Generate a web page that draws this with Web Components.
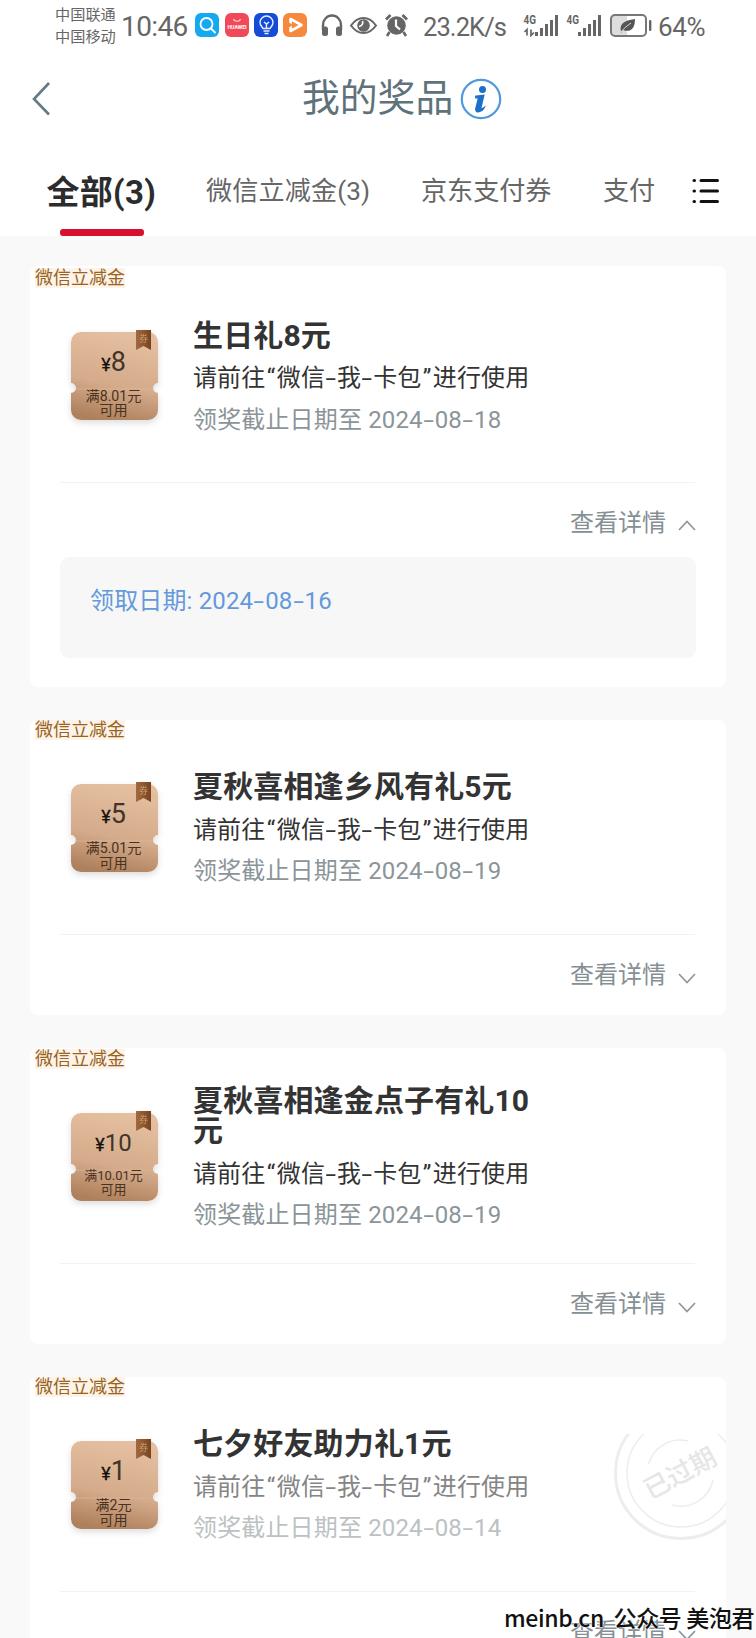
<!DOCTYPE html>
<html lang="zh-CN">
<head>
<meta charset="utf-8">
<title>我的奖品</title>
<style>
html,body{margin:0;padding:0}
body{width:756px;height:1638px;overflow:hidden;position:relative;background:#f9f9f9;font-family:Roboto,"Noto Sans CJK SC",sans-serif;color:#333}
main{display:flex;flex-direction:column;gap:33px;padding:30px 30px 0}
</style>
</head>
<body>
<status-bar></status-bar>
<page-header>我的奖品</page-header>
<tab-bar></tab-bar>
<main>
<prize-card amount="8" limit="满8.01元" deadline="2024-08-18" received="2024-08-16">生日礼8元</prize-card>
<prize-card amount="5" limit="满5.01元" deadline="2024-08-19">夏秋喜相逢乡风有礼5元</prize-card>
<prize-card amount="10" limit="满10.01元" deadline="2024-08-19" small>夏秋喜相逢金点子有礼10元</prize-card>
<prize-card amount="1" limit="满2元" deadline="2024-08-14" expired>七夕好友助力礼1元</prize-card>
</main>
<water-mark>meinb.cn&nbsp; 公众号 美泡君</water-mark>
<script>
const define=(name,render)=>customElements.define(name,class extends HTMLElement{
  connectedCallback(){ if(!this.shadowRoot) this.attachShadow({mode:'open'}).innerHTML=render(this); }
});
const dash=s=>s.replace(/-/g,'<span class="d">-</span>');
const dashCss='.d{display:inline-block;width:.5em;text-align:center;transform:scaleX(1.6)}';

define('status-bar',()=>`<style>
:host{display:flex;height:60px;box-sizing:border-box;padding:0 0 0 55px;color:#666;background:#fff;align-items:flex-start;white-space:nowrap}
.car{width:66px;font-size:15.2px;line-height:22px;padding-top:4px}
.time{width:74px;font-size:28px;line-height:28px;padding-top:13px;letter-spacing:-.6px}
.ic{display:block;flex:none;margin-top:13px}
.net{font-size:25.5px;line-height:28px;padding-top:13px;width:100px;letter-spacing:-.9px;margin-left:14px}
.pct{font-size:26px;line-height:28px;padding-top:13px;margin-left:5px;letter-spacing:-.3px}
</style>
<div class="car">中国联通<br>中国移动</div><div class="time">10:46</div>
<svg class="ic" width="214" height="24" viewBox="195 0 214 24" fill="none">
<rect x="195" width="24" height="24" rx="6" fill="#15aaf0"/><circle cx="206.500" cy="11" r="6" stroke="#fff" stroke-width="1.800"/><path d="M211 15.500l4 4" stroke="#fff" stroke-width="1.800" stroke-linecap="round"/>
<rect x="225" width="24" height="24" rx="6" fill="#f2495a"/><path d="M233.500 6c1 3 6 3 7 0" stroke="#ffc9bb" stroke-width="1.200"/><text x="237" y="15.500" text-anchor="middle" font-size="4.600" font-weight="700" fill="#fff" font-family="Roboto" textLength="19" lengthAdjust="spacingAndGlyphs">HUAWEI</text>
<rect x="254" width="24" height="24" rx="6" fill="#164bd8"/><path d="M263 15.500c-1-2-3-3-3-6a6.500 6.500 0 0 1 13 0c0 3-2 4-3 6zM263.500 18h6M264.500 20.500h4M264 9l2.500 2 2.500-2M266.500 11v4" stroke="#e5f0ff" stroke-width="1.400"/>
<rect x="283" width="24" height="24" rx="6" fill="#f58a3f"/><path d="M290.500 6v12l11-6z" stroke="#fff" stroke-width="2.600" stroke-linejoin="round"/><path d="M289 9.500l4 2.500-4 2.500" fill="#f58a3f"/>
<path d="M323 17v-5a9 9.500 0 0 1 18 0v5" stroke="#666" stroke-width="2.400"/><rect x="322" y="13.500" width="6" height="9.500" rx="2.500" fill="#666"/><rect x="336" y="13.500" width="6" height="9.500" rx="2.500" fill="#666"/>
<path d="M351 12.500c7-10 18-10 25 0-7 10-18 10-25 0z" stroke="#666" stroke-width="2"/><circle cx="363.500" cy="12.500" r="6.300" fill="#666"/><path d="M362.500 8a4 4 0 0 1-3.500 5.500" stroke="#fff" stroke-width="1.600"/>
<circle cx="396.500" cy="12.500" r="9.300" fill="#666"/><path d="M396 6.500v6.500l4 3.500" stroke="#fff" stroke-width="2.200"/><path d="M386 6.500l4.500-4.500M402.500 2l4.500 4.500" stroke="#666" stroke-width="2.800"/><path d="M389.500 19l-2.500 4M403.500 19l2.500 4" stroke="#666" stroke-width="2.600"/>
</svg>
<div class="net">23.2K/s</div>
<svg class="ic" width="130" height="24" viewBox="522 0 130 24" fill="none">
<g fill="#666" font-family="Roboto" font-size="12" font-weight="700"><text x="522.500" y="10.500" textLength="12.500" lengthAdjust="spacingAndGlyphs">4G</text><text x="565.500" y="10.500" textLength="12.500" lengthAdjust="spacingAndGlyphs">4G</text></g>
<path d="M526 22.500v-6l-2.500 2.500M530 16.500v6l3-3" stroke="#666" stroke-width="1.700"/>
<path d="M535.500 23v-4M540.500 23v-8M545.500 23v-12M550.500 23v-16M555.500 23V2M578.500 23v-4M583.500 23v-8M588.500 23v-12M593.500 23v-16M598.500 23V2" stroke="#666" stroke-width="3"/>
<rect x="611" y="3" width="15" height="19" fill="#ddd"/><rect x="610" y="2" width="35" height="21" rx="4" stroke="#777" stroke-width="2"/><rect x="648" y="7" width="2.400" height="11" rx="1" fill="#666"/>
<path d="M620 18c-2-9 7-11 14-12 0 9-4 14-12 11l-2 3z" fill="#555"/><path d="M620 19c3-4 6-6 10-9" stroke="#ddd"/>
</svg><div class="pct">64%</div>`);

define('page-header',()=>`<style>
:host{display:grid;grid-template-columns:302px auto 1fr;align-items:center;height:78px;background:#fff;color:#5f727b;font-size:37.8px;line-height:50px;white-space:nowrap}
.b{display:block;margin-left:31px}.i{display:block;margin-left:7px;margin-top:0}
.t{margin-top:-2px}
</style>
<svg class="b" width="22" height="36" fill="none"><path d="M18 2L3 18l15 15.500" stroke="#647a84" stroke-width="2.600"/></svg>
<div class="t"><slot></slot></div>
<svg class="i" width="42" height="42" fill="none"><circle cx="21" cy="21" r="19.200" stroke="#5199df" stroke-width="2.200"/><circle cx="22.500" cy="11.500" r="3.500" fill="#1c70c8"/><path d="M16 18.500l7.500-1-3 13c-.3 1.500.5 1.500 3-.2-1.500 3-8 5-7.500.7l2.600-10.500c.1-.8-1-1-2.600-1z" fill="#1c70c8" stroke="#1c70c8" stroke-width="1.800"/></svg>`);

define('tab-bar',()=>`<style>
:host{display:flex;height:98px;background:#fff;font-size:26.1px;color:#666;line-height:40px;padding-left:46.5px;white-space:nowrap;box-sizing:border-box}
.tab{padding-top:33px}
.on{width:159.5px;font-size:33px;font-weight:700;color:#2c2c2c;display:flex;flex-direction:column;letter-spacing:.3px}
.on span{position:relative;top:1.5px}
.on i{display:block;width:84px;height:7px;border-radius:3px;background:#d9102d;margin:18px 0 0 13.5px}
.w{width:215px;letter-spacing:.15px}.j{width:182px}.z{width:89px}svg{display:block;margin-top:39px}
</style>
<div class="tab on"><span>全部(3)</span><i></i></div><div class="tab w">微信立减金(3)</div><div class="tab j">京东支付券</div><div class="tab z">支付</div>
<svg width="28" height="28" fill="none" stroke="#111" stroke-width="3" stroke-linecap="round"><path d="M9 3.500h16.500M9 14h16.500M9 24.500h16.500M2 3.500h.5M2 14h.5M2 24.500h.5"/></svg>`);

define('coupon-art',el=>`<style>
:host{display:grid;width:88px;height:92px;grid-template:1fr/1fr}
svg,.x{grid-area:1/1}.x{display:flex;flex-direction:column;align-items:center;color:#3c2c22;z-index:1;padding-right:3px}
svg{overflow:visible;filter:drop-shadow(0 3px 3px #0002)}
.a{font-size:27px;line-height:30px;margin-top:17px;white-space:nowrap;color:#40342c}.a b{font-size:18px;font-weight:400;color:#16110d;-webkit-text-stroke:.3px #16110d}
.l{font-size:14.2px;line-height:14.5px;margin-top:9px;text-align:center;color:#4a321f}
:host([small]) .a{font-size:24px}:host([small]) .l{font-size:13px}
</style>
<svg width="88" height="92" viewBox="0 0 88 92"><defs><linearGradient id="g" x1=".6" y1="0" x2=".4" y2="1"><stop offset="0" stop-color="#e5c0a0"/><stop offset=".6" stop-color="#d4ab8b"/><stop offset="1" stop-color="#ae805c"/></linearGradient><linearGradient id="r" x2="1" y2="0"><stop stop-color="#a36a3e"/><stop offset="1" stop-color="#77431f"/></linearGradient></defs>
<path d="M10 2H77a10 10 0 0 1 10 10V53a5 5 0 0 0 0 10V80a10 10 0 0 1-10 10H10A10 10 0 0 1 0 80V63a5 5 0 0 0 0-10V12A10 10 0 0 1 10 2Z" fill="url(#g)"/><path d="M5 59H82" stroke="#dfb798" stroke-width=".7"/>
<path d="M65 0H80V20l-7.500-4-7.500 4z" fill="url(#r)"/><text x="72.500" y="12" font-size="9" text-anchor="middle" fill="#c99a70" font-family="Noto Sans CJK SC">券</text></svg>
<div class="x"><div class="a"><b>¥</b>${el.getAttribute('amount')}</div><div class="l">${el.getAttribute('limit')}<br>可用</div></div>`);

define('expired-stamp',()=>`<style>:host{display:block;width:112px;height:108px;overflow:hidden}svg{display:block}</style>
<svg width="112" height="108" fill="none" stroke="#ededed"><circle cx="67" cy="39" r="65.500" stroke-width="3"/><circle cx="67" cy="39" r="54" stroke-width="1.500"/><path d="M34.500 30A33 33 0 0 1 74 7M58 71A33 33 0 0 0 99 46" stroke-width="1.500"/><text x="66" y="48" transform="rotate(-28 67 39)" text-anchor="middle" font-family="Noto Sans CJK SC" font-size="26" font-weight="500" fill="#e6e6e6" stroke="none">已过期</text></svg>`);

define('prize-card',el=>{
const r=el.getAttribute('received'),x=el.hasAttribute('expired');
return `<style>${dashCss}
:host{display:flex;flex-direction:column;position:relative;background:#fff;border-radius:8px;height:${r?420.5:295.5}px;flex:none;box-sizing:border-box}
.tag{align-self:flex-start;margin:${r?1.5:.5}px 0 0 5px;font-size:18px;line-height:20px;height:20px;color:#976322;background:#fdf3e8;white-space:nowrap}
.row{display:flex;height:194px;box-sizing:border-box;padding-left:41px}
coupon-art{margin-top:42px}
.txt{width:352px;margin-left:34px;margin-top:${r?1.5:.5}px;display:flex;flex-direction:column;justify-content:center;height:184px}
.h{font-size:30px;line-height:30.500px;font-weight:700;color:#333;margin-bottom:7px;letter-spacing:.15px}
.s,.e{font-size:24px;line-height:41.500px;white-space:nowrap}
.s{color:${x?'#858585':'#333'};letter-spacing:.1px}.e{color:${x?'#bcc1c3':'#8b9599'};letter-spacing:.15px}
.q{display:inline-block;width:.48em;text-align:center}
hr{border:0;height:1px;background:#f2f2f2;margin:0 31px 0 30px;width:635px}
.more{display:flex;justify-content:flex-end;align-items:center;height:${r?74:80}px;padding-right:30px;font-size:24px;color:#858f94;line-height:30px}
.more span{margin-top:${r?7:0}px}.more svg{margin:${r?11:7}px 0 0 12px}
.box{margin:0 30px;height:101px;background:#f7f7f7;border-radius:9px;box-sizing:border-box;padding:24px 30px;font-size:24px;line-height:40px;color:#6499da;letter-spacing:.15px}
expired-stamp{position:absolute;right:0;top:57px}
</style>
<div class="tag">微信立减金</div>
<div class="row"><coupon-art amount="${el.getAttribute('amount')}" limit="${el.getAttribute('limit')}" ${el.hasAttribute('small')?'small':''}></coupon-art>
<div class="txt"><div class="h"><slot></slot></div><div class="s">请前往<span class="q">“</span>${dash('微信-我-卡包')}<span class="q">”</span>进行使用</div><div class="e">领奖截止日期至 ${dash(el.getAttribute('deadline'))}</div></div></div>
<hr>
<div class="more"><span>查看详情</span><svg width="18" height="13" fill="none" stroke="#90989c" stroke-width="1.800"><path d="${r?'M1 11L9 2.500l8 8.500':'M1 2L9 10.500l8-8.500'}"/></svg></div>
${r?`<div class="box">领取日期: ${dash(r)}</div>`:''}${x?'<expired-stamp></expired-stamp>':''}`});

define('water-mark',()=>`<style>:host{position:absolute;left:504px;top:1600px;font:500 23px/34px "Noto Sans CJK SC",sans-serif;letter-spacing:-.35px;color:#111;white-space:nowrap;text-shadow:0 0 2px #fff,0 0 2px #fff}</style><slot></slot>`);
</script>
</body>
</html>
